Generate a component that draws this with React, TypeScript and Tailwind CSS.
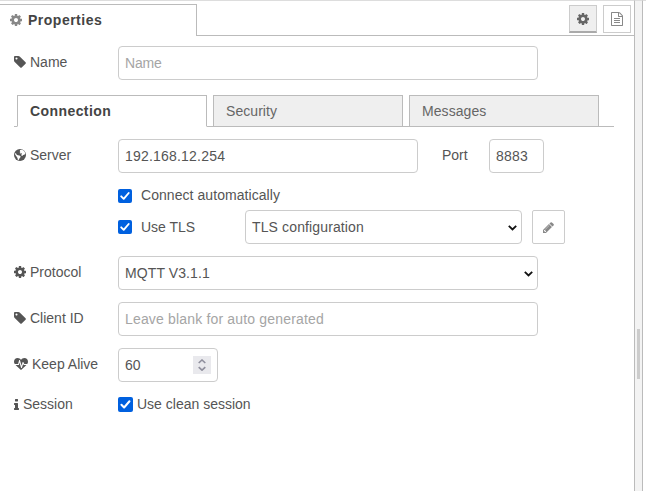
import { useState, type ReactNode } from "react";

const paths = {
  cog: "M1152 896q0-106-75-181t-181-75-181 75-75 181 75 181 181 75 181-75 75-181zm512-109v222q0 12-8 23t-20 13l-185 28q-19 54-39 91 35 50 107 138 10 12 10 25t-9 23q-27 37-99 108t-94 71q-12 0-26-9l-138-108q-44 23-91 38-16 136-29 186-7 28-36 28h-222q-14 0-24.5-8.5t-11.5-21.5l-28-184q-49-16-90-37l-141 107q-10 9-25 9-14 0-25-11-126-114-165-168-7-10-7-23 0-12 8-23 15-21 51-66.5t54-70.5q-27-50-41-99l-183-27q-13-2-21-12.5t-8-23.5v-222q0-12 8-23t19-13l186-28q14-46 39-92-40-57-107-138-10-12-10-24 0-10 9-23 26-36 98.5-107.5t94.5-71.5q13 0 26 10l138 107q44-23 91-38 16-136 29-186 7-28 36-28h222q14 0 24.5 8.5t11.5 21.5l28 184q49 16 90 37l142-107q9-9 24-9 13 0 25 10 129 119 165 170 7 8 7 22 0 12-8 23-15 21-51 66.5t-54 70.5q26 50 41 98l183 28q13 2 21 12.5t8 23.5z",
  tag: "M576 448q0-53-37.5-90.5t-90.5-37.5-90.5 37.5-37.5 90.5 37.5 90.5 90.5 37.5 90.5-37.5 37.5-90.5zm1067 576q0 53-37 90l-491 492q-39 37-91 37-53 0-90-37l-715-716q-38-37-64.5-101t-26.5-117v-416q0-52 38-90t90-38h416q53 0 117 26.5t102 64.5l715 714q37 39 37 91z",
  pencil: "M491 1536l91-91-235-235-91 91v107h128v128h107zm523-928q0-22-22-22-10 0-17 7l-542 542q-7 7-7 17 0 22 22 22 10 0 17-7l542-542q7-7 7-17zm-54-192l416 416-832 832h-416v-416zm683 96q0 53-37 90l-166 166-416-416 166-165q36-38 90-38 53 0 91 38l235 234q37 39 37 91z",
  file: "M1596 380q28 28 48 76t20 88v1152q0 40-28 68t-68 28h-1344q-40 0-68-28t-28-68v-1600q0-40 28-68t68-28h896q40 0 88 20t76 48zm-444-244v376h376q-10-29-22-41l-313-313q-12-12-41-22zm384 1528v-1024h-416q-40 0-68-28t-28-68v-416h-768v1536h1280zm-1024-864q0-14 9-23t23-9h704q14 0 23 9t9 23v64q0 14-9 23t-23 9h-704q-14 0-23-9t-9-23v-64zm736 224q14 0 23 9t9 23v64q0 14-9 23t-23 9h-704q-14 0-23-9t-9-23v-64q0-14 9-23t23-9h704zm0 256q14 0 23 9t9 23v64q0 14-9 23t-23 9h-704q-14 0-23-9t-9-23v-64q0-14 9-23t23-9h704z",
  info: "M1216 1344v128q0 26-19 45t-45 19h-512q-26 0-45-19t-19-45v-128q0-26 19-45t45-19h64v-384h-64q-26 0-45-19t-19-45v-128q0-26 19-45t45-19h384q26 0 45 19t19 45v576h64q26 0 45 19t19 45zm-128-1152v192q0 26-19 45t-45 19h-256q-26 0-45-19t-19-45v-192q0-26 19-45t45-19h256q26 0 45 19t19 45z",
  heartbeat: "M1280 1024h305q-5 6-10 10.5t-9 7.5l-3 4-623 600q-18 18-44 18t-44-18l-624-602q-5-2-21-20h369q22 0 39.5-13.5t22.5-34.5l70-281 190 667q6 20 23 33t39 13q21 0 38-13t23-33l146-485 56 112q18 35 57 35zm512-428q0 145-103 300h-369l-111-221q-8-17-25.5-27t-36.5-8q-45 5-56 46l-129 430-196-686q-6-20-23.5-33t-39.5-13-39 13.5-22 34.5l-116 464h-423q-103-155-103-300 0-220 127-344t351-124q62 0 126.5 21.5t120 58 95.5 68.5 76 68q36-36 76-68t95.5-68.5 120-58 126.5-21.5q224 0 351 124t127 344z",
};

type IconName = keyof typeof paths;

function Icon({ name, className = "", viewBox = "0 0 1792 1792" }: { name: IconName; className?: string; viewBox?: string }) {
  return (
    <svg viewBox={viewBox} className={`shrink-0 fill-current ${className}`}>
      <path d={paths[name]} />
    </svg>
  );
}

function Globe() {
  return (
    <svg viewBox="0 0 12 12" className="size-3 shrink-0">
      <circle cx="6" cy="6" r="6" fill="#555" />
      <path d="M6 1.1L7.6.7l1.5.6 1.2 1 .8 1.4.1 1.3-1 .8-1.1.2-.8 1.1-1-.6.1-1.1.7-.6-.8-.5-1.2.3-.4-.8.8-.9-.7-.5zM1.3 4l.8.6.6 1.1 1.2.6 1.6.2 1.2.9-.4 1.2-.9.9-.6 1.5-1-.3-.3-1.8-.8-1.1-.9-1.4-.8-1.1z" fill="#fff" />
    </svg>
  );
}

function Label({ icon, text, gap = "gap-1" }: { icon: ReactNode; text: string; gap?: string }) {
  return (
    <div className={`flex h-[32px] w-[104px] shrink-0 items-center ${gap}`}>
      {icon}
      <span>{text}</span>
    </div>
  );
}

function Check({ big = false }: { big?: boolean }) {
  const [on, setOn] = useState(true);
  return (
    <button
      type="button"
      role="checkbox"
      aria-checked={on}
      onClick={() => setOn(!on)}
      className={`shrink-0 rounded-[2px] ${big ? "size-[15px]" : "size-[14px]"} ${on ? "bg-[#0060df]" : "border border-[#8f8f9d] bg-white"}`}
    >
      {on && (
        <svg viewBox="0 0 14 14" className="size-full">
          <path d="M3.2 7.3l2.5 2.5 5-5.8" fill="none" stroke="#fff" strokeWidth="1.9" strokeLinecap="round" strokeLinejoin="round" />
        </svg>
      )}
    </button>
  );
}

function Chevron() {
  return (
    <svg viewBox="0 0 9 6" className="mt-px h-[6px] w-[9px]" fill="none" stroke="#111" strokeWidth="1.8">
      <path d="M.8.8l3.7 3.7L8.2.8" />
    </svg>
  );
}

const field = "h-[34px] shrink-0 rounded-[4px] border border-[#ccc] bg-white px-1.5 pb-px outline-none placeholder:text-[#a5a5a5]";
const select = "flex h-[34px] shrink-0 items-center justify-between rounded-[4px] border border-[#ccc] bg-white pl-1.5";

export default function App() {
  const [tab, setTab] = useState("Connection");
  return (
    <div className="flex h-[491px] w-[646px] overflow-hidden bg-white font-['Liberation_Sans',Arial,sans-serif] text-[14px] leading-5 text-[#555]">
      <main className="h-full w-[635px] shrink-0 border-t border-r border-t-[#ddd] border-r-[#bbb]">
        <header className="flex h-[35px] pt-[3px]">
          <div className="flex w-[197px] items-center gap-1.5 border-t border-r border-[#bbb] pb-px pl-[10px]">
            <Icon name="cog" viewBox="128 128 1536 1536" className="size-3 text-[#888]" />
            <span className="font-bold tracking-[0.5px] text-[#444]">Properties</span>
          </div>
          <div className="flex flex-1 justify-end gap-[6px] border-b border-[#bbb] pt-px pr-[3px]">
            <button className="flex h-[28px] w-[28px] items-center justify-center border border-b-2 border-[#ccc] border-b-[#aaa] bg-[#efefef] pt-px">
              <Icon name="cog" viewBox="128 128 1536 1536" className="size-3 text-[#666]" />
            </button>
            <button className="flex h-[28px] w-[28px] items-center justify-center border border-[#ccc] bg-white">
              <Icon name="file" viewBox="128 0 1536 1792" className="h-[14px] w-[12px] text-[#888]" />
            </button>
          </div>
        </header>

        <form className="pt-[10px] pl-[14px]" onSubmit={(e) => e.preventDefault()}>
          <div className="flex">
            <Label icon={<Icon name="tag" viewBox="128 128 1536 1536" className="size-3" />} text="Name" />
            <input className={`${field} w-[420px] tracking-[-0.2px]`} placeholder="Name" />
          </div>

          <div className="mt-[15px] flex h-[32px] w-[600px]">
            <div className="w-[3px] border-b border-[#bbb]" />
            {["Connection", "Security", "Messages"].map((name) => (
              <div key={name} className="flex">
                <button
                  type="button"
                  onClick={() => setTab(name)}
                  className={`w-[190px] border border-[#bbb] pl-3 text-left ${tab === name ? "border-b-transparent bg-white font-bold tracking-[0.42px] text-[#444]" : "bg-[#efefef] tracking-[0.06px] text-[#666]"}`}
                >
                  {name}
                </button>
                {name !== "Messages" && <div className="w-[6px] border-b border-[#bbb]" />}
              </div>
            ))}
            <div className="flex-1 border-b border-[#bbb]" />
          </div>

          <div className="mt-[12px] flex">
            <Label icon={<Globe />} text="Server" />
            <input className={`${field} w-[300px] tracking-[0.2px]`} defaultValue="192.168.12.254" />
            <span className="flex h-[32px] w-[71px] items-center pl-6">Port</span>
            <input className={`${field} w-[55px] tracking-[0.2px]`} defaultValue="8883" />
          </div>

          <label className="mt-[12px] ml-[104px] flex h-[22px] items-center gap-[9px]">
            <Check />
            <span className="pb-0.5 tracking-[0.06px]">Connect automatically</span>
          </label>

          <div className="mt-[3px] ml-[104px] flex items-center">
            <label className="flex w-[127px] items-center gap-[9px]">
              <Check />
              <span>Use TLS</span>
            </label>
            <div className={`${select} w-[277px] pr-[4px]`}>
              <span className="tracking-[0.13px]">TLS configuration</span>
              <Chevron />
            </div>
            <button type="button" className="ml-[10px] flex h-[34px] w-[33px] items-center justify-center rounded-[2px] border border-[#ccc] bg-white">
              <Icon name="pencil" viewBox="128 128 1536 1536" className="size-[11px] text-[#888]" />
            </button>
          </div>

          <div className="mt-[12px] flex">
            <Label icon={<Icon name="cog" viewBox="128 128 1536 1536" className="size-3" />} text="Protocol" />
            <div className={`${select} w-[420px] pr-[4px]`}>
              <span className="tracking-[0.1px]">MQTT V3.1.1</span>
              <Chevron />
            </div>
          </div>

          <div className="mt-[12px] flex">
            <Label icon={<Icon name="tag" viewBox="128 128 1536 1536" className="size-3" />} text="Client ID" />
            <input className={`${field} w-[420px] tracking-[0.17px]`} placeholder="Leave blank for auto generated" />
          </div>

          <div className="mt-[12px] flex">
            <Label icon={<Icon name="heartbeat" className="size-[14px]" />} text="Keep Alive" />
            <div className="flex h-[34px] w-[100px] items-center justify-between rounded-[4px] border border-[#ccc] pr-1.5 pl-1.5">
              <span>60</span>
              <div className="flex h-[18px] w-[18px] items-center justify-center bg-[#e9e9ed]">
                <svg viewBox="0 0 8 12" className="h-[12px] w-[8px]" fill="none" stroke="#8f8f9d" strokeWidth="1.6">
                  <path d="M.7 4L4 1l3.3 3M.7 8.2L4 11.2l3.3-3" />
                </svg>
              </div>
            </div>
          </div>

          <div className="mt-[6px] flex">
            <Label icon={<Icon name="info" viewBox="576 128 640 1408" className="h-[11px] w-[5px]" />} text="Session" />
            <label className="flex h-[33px] items-center gap-1">
              <Check big />
              <span className="pb-px">Use clean session</span>
            </label>
          </div>
        </form>
      </main>
      <div className="flex h-full w-[8px] shrink-0 border-t border-r border-t-[#ddd] border-r-[#bbb] bg-[#f3f3f3] pt-[328px] pl-[2px]">
        <div className="h-[50px] w-[3px] bg-[#ccc]" />
      </div>
      <div className="flex-1 border-t border-[#ddd]" />
    </div>
  );
}
